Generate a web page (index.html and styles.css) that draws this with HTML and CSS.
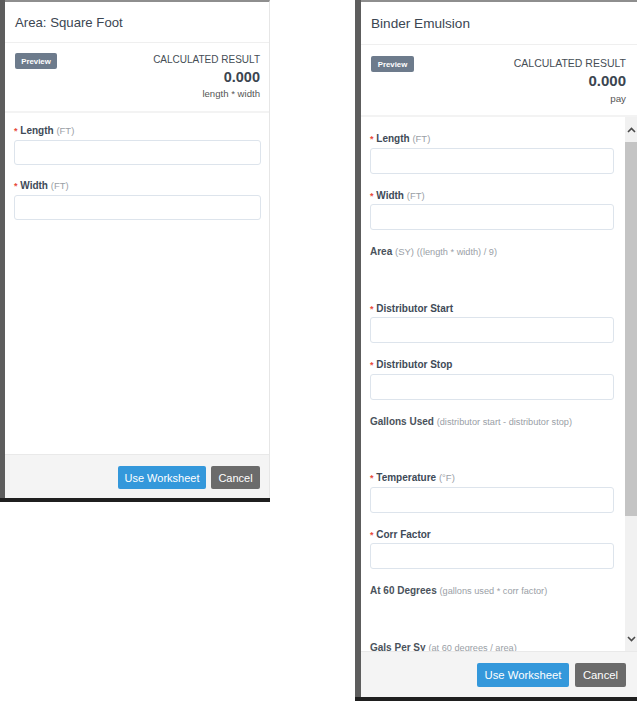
FILE: index.html
```html
<!DOCTYPE html>
<html lang="en">
<head>
    <meta charset="UTF-8">
    <meta name="viewport" content="width=device-width, initial-scale=1.0">
    <title>Worksheets</title>
    <link rel="stylesheet" href="styles.css">
</head>
<body>
    <div class="shot shot-sm">
        <div class="backdrop"></div>
        <div class="modal">
            <div class="modal-header">Area: Square Foot</div>
            <div class="result">
                <span class="preview">Preview</span>
                <div class="calc">
                    <div class="calc-title">CALCULATED RESULT</div>
                    <div class="calc-value">0.000</div>
                    <div class="calc-expr">length * width</div>
                </div>
            </div>
            <div class="modal-body">
                <div class="fields">
                    <div class="field">
                        <div class="field-label"><span class="req">*</span> Length <span class="unit">(FT)</span></div>
                        <div class="input"></div>
                    </div>
                    <div class="field">
                        <div class="field-label"><span class="req">*</span> Width <span class="unit">(FT)</span></div>
                        <div class="input"></div>
                    </div>
                </div>
            </div>
            <div class="modal-footer">
                <button class="btn btn-primary">Use Worksheet</button>
                <button class="btn btn-cancel">Cancel</button>
            </div>
        </div>
    </div>

    <div class="shot shot-lg">
        <div class="backdrop"></div>
        <div class="modal">
            <div class="modal-header">Binder Emulsion</div>
            <div class="result">
                <span class="preview">Preview</span>
                <div class="calc">
                    <div class="calc-title">CALCULATED RESULT</div>
                    <div class="calc-value">0.000</div>
                    <div class="calc-expr">pay</div>
                </div>
            </div>
            <div class="modal-body">
                <div class="fields">
                    <div class="field">
                        <div class="field-label"><span class="req">*</span> Length <span class="unit">(FT)</span></div>
                        <div class="input"></div>
                    </div>
                    <div class="field">
                        <div class="field-label"><span class="req">*</span> Width <span class="unit">(FT)</span></div>
                        <div class="input"></div>
                    </div>
                    <div class="field computed">
                        <div class="field-label">Area <span class="unit">(SY)</span> <span class="formula">((length * width) / 9)</span></div>
                        <div class="spacer"></div>
                    </div>
                    <div class="field">
                        <div class="field-label"><span class="req">*</span> Distributor Start</div>
                        <div class="input"></div>
                    </div>
                    <div class="field">
                        <div class="field-label"><span class="req">*</span> Distributor Stop</div>
                        <div class="input"></div>
                    </div>
                    <div class="field computed">
                        <div class="field-label">Gallons Used <span class="formula">(distributor start - distributor stop)</span></div>
                        <div class="spacer"></div>
                    </div>
                    <div class="field">
                        <div class="field-label"><span class="req">*</span> Temperature <span class="unit">(°F)</span></div>
                        <div class="input"></div>
                    </div>
                    <div class="field">
                        <div class="field-label"><span class="req">*</span> Corr Factor</div>
                        <div class="input"></div>
                    </div>
                    <div class="field computed">
                        <div class="field-label">At 60 Degrees <span class="formula">(gallons used * corr factor)</span></div>
                        <div class="spacer"></div>
                    </div>
                    <div class="field computed">
                        <div class="field-label">Gals Per Sy <span class="formula">(at 60 degrees / area)</span></div>
                        <div class="spacer"></div>
                    </div>
                </div>
                <div class="scrollbar">
                    <div class="sb-btn">
                        <svg width="9" height="6" viewBox="0 0 9 6"><path d="M1 5 L4.5 1.5 L8 5" fill="none" stroke="#4a4a4a" stroke-width="1.6"/></svg>
                    </div>
                    <div class="sb-thumb"></div>
                    <div class="sb-track"></div>
                    <div class="sb-btn">
                        <svg width="9" height="6" viewBox="0 0 9 6"><path d="M1 1 L4.5 4.5 L8 1" fill="none" stroke="#4a4a4a" stroke-width="1.6"/></svg>
                    </div>
                </div>
            </div>
            <div class="modal-footer">
                <button class="btn btn-primary">Use Worksheet</button>
                <button class="btn btn-cancel">Cancel</button>
            </div>
        </div>
    </div>
</body>
</html>
```

FILE: styles.css
```css
* { margin: 0; padding: 0; box-sizing: border-box; }
body { font-family: 'Liberation Sans', Arial, sans-serif; background: #fff; display: flex; align-items: flex-start; gap: 85px; width: 637px; height: 701px; overflow: hidden; }

.shot { display: flex; background: #5d5d5d; border-bottom: 4px solid #1f1f1f; }
.shot-sm { width: 270px; height: 502px; }
.shot-lg { width: 282px; height: 701px; }
.backdrop { width: 5px; flex-shrink: 0; }
.shot-lg .backdrop { width: 6px; }

.modal { flex: 1; display: flex; flex-direction: column; background: #fff; border-top: 2px solid #8e8e8e; min-width: 0; }
.shot-sm .modal { border-right: 1px solid #e6e6e6; }

.modal-header { height: 41px; display: flex; align-items: center; padding-left: 10px; border-bottom: 1px solid #efefef; font-size: 13.2px; color: #3b4652; }
.shot-lg .modal-header { height: 43px; font-size: 13.6px; }

.result { display: flex; justify-content: space-between; align-items: flex-start; padding: 10px 9px 10px 10px; border-bottom: 2px solid #f3f3f3; }
.shot-lg .result { padding: 11px 11px 9px 10px; }
.preview { width: 42px; height: 16px; display: flex; align-items: center; justify-content: center; background: #6d7b8c; color: #fff; font-size: 7.8px; font-weight: bold; border-radius: 2px; }
.shot-lg .preview { width: 43px; }
.calc { text-align: right; color: #454d55; }
.calc-title { font-size: 10px; line-height: 14px; }
.calc-value { font-size: 14.5px; font-weight: bold; line-height: 20px; color: #3b4550; }
.calc-expr { font-size: 9.6px; line-height: 14px; color: #555; }
.shot-lg .calc-title { font-size: 10.5px; }
.shot-lg .calc-value { font-size: 15px; line-height: 22px; }
.shot-lg .calc-expr { font-size: 9.8px; }

.modal-body { flex: 1; display: flex; overflow: hidden; }
.fields { flex: 1; padding: 11px 8px 0 9px; overflow: hidden; }
.shot-lg .fields { padding: 15px 11px 0 9px; }

.field { margin-bottom: 13.5px; }
.field-label { height: 13px; font-size: 10px; font-weight: bold; line-height: 13px; color: #3e4a57; margin-bottom: 3px; white-space: nowrap; }
.req { color: #e74c3c; font-size: 9px; }
.unit { font-weight: normal; color: #9aa0a6; font-size: 9.5px; }
.formula { font-weight: normal; color: #9aa0a6; font-size: 9.2px; }
.computed .field-label { color: #4a525b; }
.input { height: 25px; border: 1px solid #dde4ec; border-radius: 3px; background: #fff; }
.spacer { height: 25px; }
.shot-lg .field { margin-bottom: 15px; }
.shot-lg .field-label { margin-bottom: 2.5px; }
.shot-lg .input, .shot-lg .spacer { height: 26px; }

.scrollbar { width: 12px; flex-shrink: 0; display: flex; flex-direction: column; background: #f1f1f1; }
.sb-btn { height: 25px; display: flex; align-items: center; justify-content: center; }
.sb-thumb { height: 374px; background: #c4c4c4; }
.sb-track { flex: 1; }

.modal-footer { height: 44px; display: flex; justify-content: flex-end; align-items: flex-start; gap: 5px; padding: 11px 9px 0 0; background: #f4f4f4; border-top: 1px solid #e9e9e9; }
.shot-lg .modal-footer { height: 46px; gap: 6px; padding: 11px 11px 0 0; }

.btn { height: 23px; border: none; border-radius: 2px; color: #fff; font-family: 'Liberation Sans', Arial, sans-serif; font-size: 11px; cursor: pointer; }
.btn-primary { width: 88px; background: #3498db; }
.btn-cancel { width: 49px; background: #6b6b6b; }
.shot-lg .btn { height: 24px; font-size: 11.3px; }
.shot-lg .btn-primary { width: 92px; }
.shot-lg .btn-cancel { width: 51px; }
```
